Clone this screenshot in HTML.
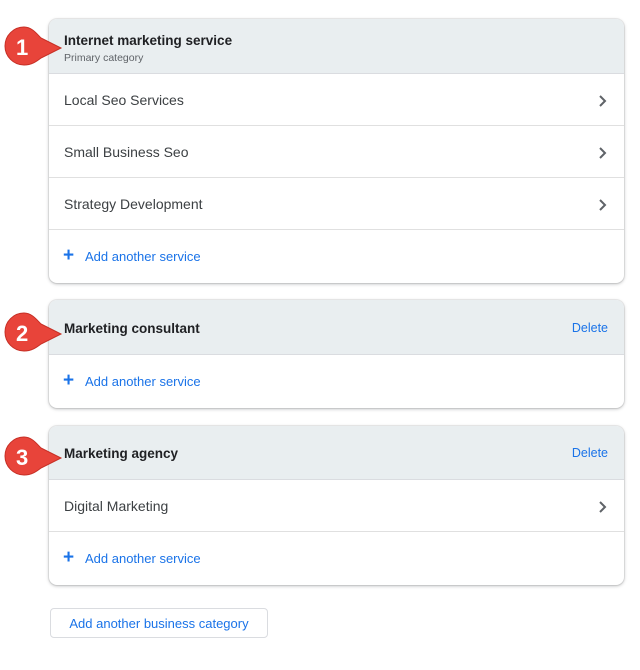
<!DOCTYPE html>
<html><head><style>
body{margin:0;width:640px;height:670px;background:#fff;font-family:"Liberation Sans",Arial,sans-serif;position:relative;overflow:hidden}
.card{position:absolute;left:49px;width:575px;border-radius:8px;background:#fff;box-shadow:0 1px 3px rgba(60,64,67,.35),0 0 0 1px rgba(60,64,67,.08);overflow:hidden}
.hd{background:#e9eef0;border-bottom:1px solid #dadce0;position:relative;box-sizing:border-box}
.t{position:absolute;left:15px;font-size:13.5px;font-weight:bold;color:#202124}
.s{position:absolute;left:15px;font-size:10.5px;color:#5f6368}
.del{position:absolute;right:16px;font-size:12.5px;color:#1a73e8}
.row{height:52px;border-bottom:1px solid #e0e0e0;position:relative;box-sizing:border-box}
.row:last-child{border-bottom:none}
.row span{position:absolute;left:15px;top:18px;font-size:14px;color:#3c4043}
.row svg{position:absolute;right:16px;top:21px}
.add span{color:#1a73e8;font-size:13px;left:36px;top:19px}
.add b{position:absolute;left:14px;top:15px;color:#1a73e8;font-size:19px;font-weight:bold}
.badge{position:absolute;left:3px}
.btn{position:absolute;left:50px;top:608px;width:218px;height:30px;border:1px solid #dadce0;border-radius:4px;box-sizing:border-box;color:#1a73e8;font-size:13px;text-align:center;line-height:29px}
</style></head><body>
<div class="card" style="top:19px;height:264px">
 <div class="hd" style="height:55px"><div class="t" style="top:14px">Internet marketing service</div><div class="s" style="top:33px">Primary category</div></div>
 <div class="row"><span>Local Seo Services</span><svg width="10" height="12"><path d="M2 1l5 5-5 5" stroke="#5f6368" stroke-width="2" fill="none"/></svg></div>
 <div class="row"><span>Small Business Seo</span><svg width="10" height="12"><path d="M2 1l5 5-5 5" stroke="#5f6368" stroke-width="2" fill="none"/></svg></div>
 <div class="row"><span>Strategy Development</span><svg width="10" height="12"><path d="M2 1l5 5-5 5" stroke="#5f6368" stroke-width="2" fill="none"/></svg></div>
 <div class="row add"><b>+</b><span>Add another service</span></div>
</div>
<div class="card" style="top:300px;height:108px">
 <div class="hd" style="height:55px"><div class="t" style="top:21px">Marketing consultant</div><div class="del" style="top:21px">Delete</div></div>
 <div class="row add"><b>+</b><span>Add another service</span></div>
</div>
<div class="card" style="top:426px;height:159px">
 <div class="hd" style="height:54px"><div class="t" style="top:20px">Marketing agency</div><div class="del" style="top:20px">Delete</div></div>
 <div class="row"><span>Digital Marketing</span><svg width="10" height="12"><path d="M2 1l5 5-5 5" stroke="#5f6368" stroke-width="2" fill="none"/></svg></div>
 <div class="row add"><b>+</b><span>Add another service</span></div>
</div>
<div class="btn">Add another business category</div>
<svg class="badge" style="top:24px" width="62" height="44"><path d="M21 3a19 19 0 0 0 0 38c8 0 13-4 17-7l20-10-20-10c-4-4-9-11-17-11z" fill="#e8443a" stroke="#c62f25" stroke-width="1"/><text x="13" y="31" font-size="22" font-weight="bold" fill="#fff" font-family="Liberation Sans">1</text></svg>
<svg class="badge" style="top:310px" width="62" height="44"><path d="M21 3a19 19 0 0 0 0 38c8 0 13-4 17-7l20-10-20-10c-4-4-9-11-17-11z" fill="#e8443a" stroke="#c62f25" stroke-width="1"/><text x="13" y="31" font-size="22" font-weight="bold" fill="#fff" font-family="Liberation Sans">2</text></svg>
<svg class="badge" style="top:434px" width="62" height="44"><path d="M21 3a19 19 0 0 0 0 38c8 0 13-4 17-7l20-10-20-10c-4-4-9-11-17-11z" fill="#e8443a" stroke="#c62f25" stroke-width="1"/><text x="13" y="31" font-size="22" font-weight="bold" fill="#fff" font-family="Liberation Sans">3</text></svg>
</body></html>
